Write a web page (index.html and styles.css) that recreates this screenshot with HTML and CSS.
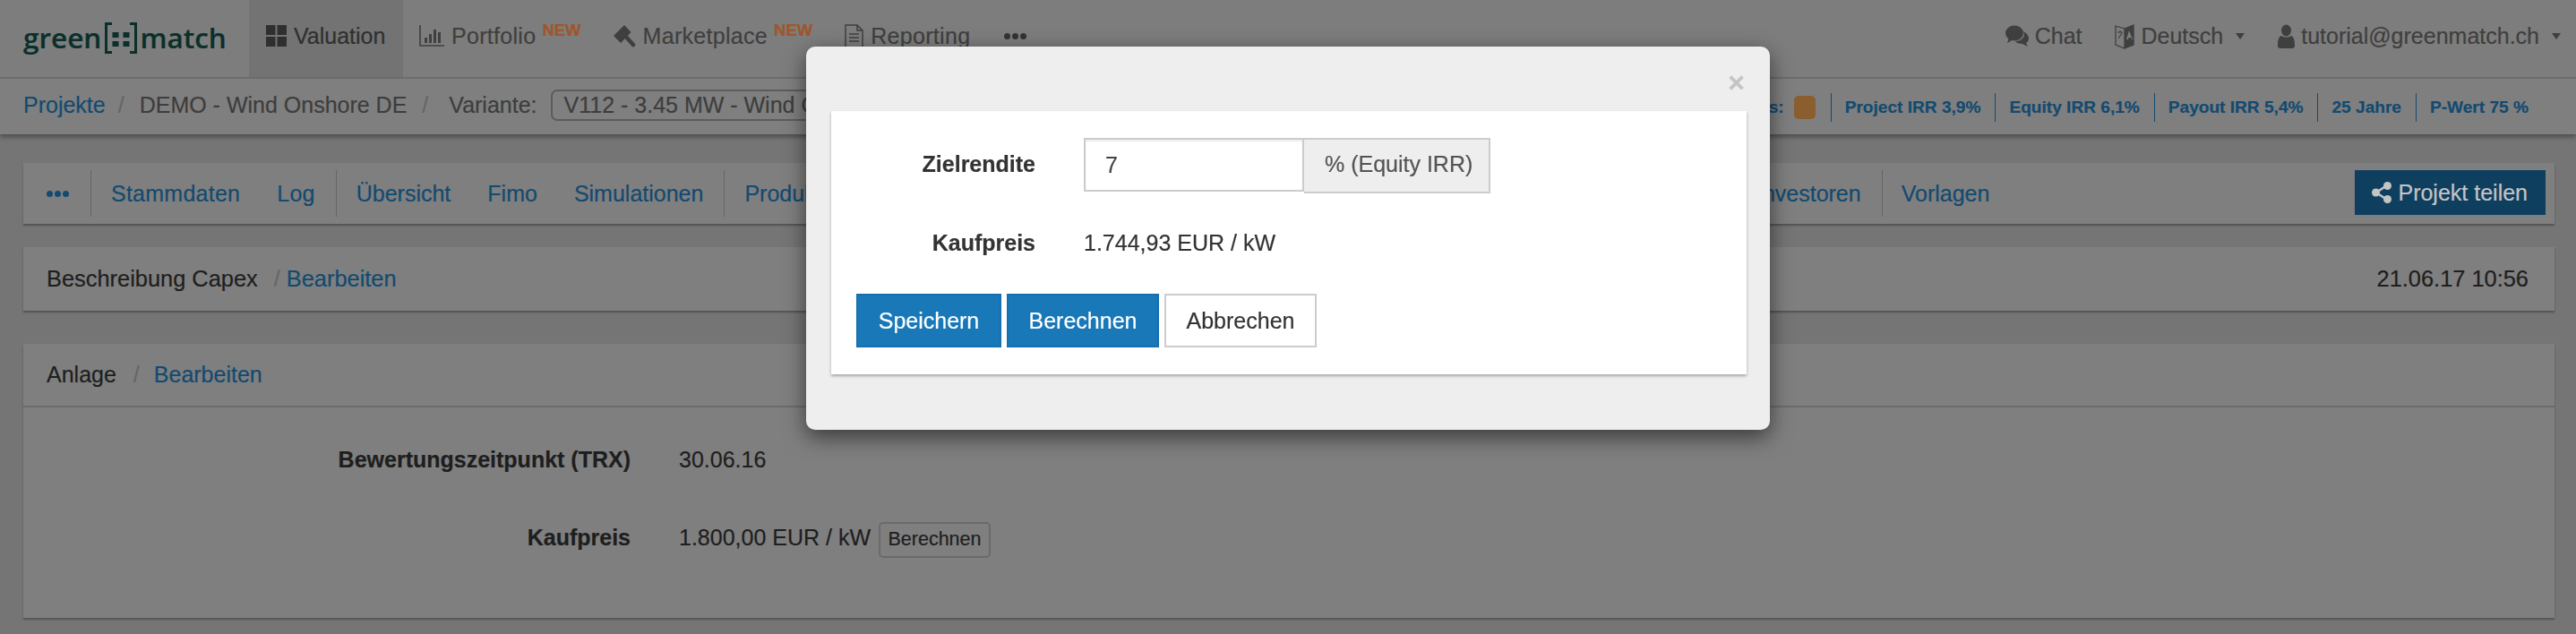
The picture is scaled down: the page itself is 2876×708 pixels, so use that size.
FILE: index.html
```html
<!DOCTYPE html>
<html lang="de">
<head>
    <meta charset="UTF-8">
    <title>greenmatch - Valuation</title>
    <link rel="stylesheet" href="styles.css">
</head>
<body>
    <!-- Top navigation -->
    <nav class="navbar">
        <a class="logo">green<svg class="logo-mark" width="36" height="35" viewBox="0 0 36 35"><path d="M8 1.500H1.500v32H8M28 1.500h6.500v32H28" fill="none" stroke="#0b2f2b" stroke-width="3"/><rect x="8.500" y="11" width="7" height="6"/><rect x="20.500" y="11" width="7" height="6"/><rect x="8.500" y="21" width="7" height="6"/><rect x="20.500" y="21" width="7" height="6"/></svg>match</a>
        <a class="nav-item active">
            <svg class="icon" width="23" height="24" viewBox="0 0 23 24"><rect width="10.5" height="11"/><rect x="12.5" width="10.5" height="11"/><rect y="13" width="10.5" height="11"/><rect x="12.5" y="13" width="10.5" height="11"/></svg>
            Valuation
        </a>
        <a class="nav-item">
            <svg class="icon" width="28" height="24" viewBox="0 0 28 24"><path d="M1 0v23h27" fill="none" stroke="currentColor" stroke-width="1.6"/><rect x="6" y="14" width="3" height="6"/><rect x="11" y="10" width="3" height="10"/><rect x="16" y="5" width="3" height="15"/><rect x="21" y="8" width="3" height="12"/></svg>
            Portfolio <sup class="new">NEW</sup>
        </a>
        <a class="nav-item">
            <svg class="icon" width="25" height="26" viewBox="0 0 25 26"><path d="M0 13L12 1l7.500 8L8 21z"/><path d="M13 13l9 10" fill="none" stroke="currentColor" stroke-width="4.500" stroke-linecap="round"/></svg>
            Marketplace <sup class="new">NEW</sup>
        </a>
        <a class="nav-item">
            <svg class="icon" width="21" height="27" viewBox="0 0 21 27"><path d="M1 1h13l6 6v19H1zM14 1v6h6M5 11h11M5 15h11M5 19h11" fill="none" stroke="currentColor" stroke-width="1.5"/></svg>
            Reporting
        </a>
        <a class="nav-item nav-dots"><span class="dots"><i></i><i></i><i></i></span></a>

        <div class="nav-right">
            <a class="nav-link">
                <svg class="icon" width="26" height="24" viewBox="0 0 26 24"><ellipse cx="10" cy="9" rx="10" ry="8.5"/><path d="M4 14l-2 6 7-4zM20 7c4 2 6 5 6 8 0 2-1 4-3 5l2 4-6-3c-4 0-7-1-8-3 7 0 12-5 9-11z"/></svg>
                Chat
            </a>
            <a class="nav-link">
                <svg class="icon" width="22" height="30" viewBox="0 0 22 30"><path d="M1 4l10 3v22L1 25zM11 7l10-4v22l-10 4" fill="none" stroke="currentColor" stroke-width="1.3"/><path d="M11 7l10-4v22l-10 4zM16 9l-3 10h2l.6-2h2.8l.6 2h1z"/><path d="M3 11h6M6 9v2M4 18l4-6" fill="none" stroke="currentColor" stroke-width="1.2"/></svg>
                Deutsch <span class="caret"></span>
            </a>
            <a class="nav-link">
                <svg class="icon" width="19" height="27" viewBox="0 0 19 27"><ellipse cx="9.500" cy="7" rx="5.500" ry="6.500"/><path d="M0 24c0-7 1.500-11 4.500-11 2 2 8 2 10 0 3 0 4.500 4 4.500 11 0 2-1 3-3 3H3c-2 0-3-1-3-3z"/></svg>
                tutorial@greenmatch.ch <span class="caret"></span>
            </a>
        </div>
    </nav>

    <!-- Breadcrumb and key figures -->
    <div class="subbar">
        <a class="link">Projekte</a>
        <span class="slash">/</span>
        <span>DEMO - Wind Onshore DE</span>
        <span class="slash slash-wide">/</span>
        <span>Variante:</span>
        <span class="variant">V112 - 3.45 MW - Wind Onshore</span>

        <div class="stats">
            <span class="status-label">Status:</span>
            <span class="status-box"></span>
            <span class="stat">Project IRR 3,9%</span>
            <span class="stat">Equity IRR 6,1%</span>
            <span class="stat">Payout IRR 5,4%</span>
            <span class="stat">25 Jahre</span>
            <span class="stat">P-Wert 75 %</span>
        </div>
    </div>

    <main class="content">
        <div class="card tabs">
            <div class="tab-group tab-first"><span class="dots"><i></i><i></i><i></i></span></div>
            <div class="tab-group tab-spaced"><a class="link">Stammdaten</a><a class="link">Log</a></div>
            <div class="tab-group"><a class="link">Übersicht</a><a class="link">Fimo</a><a class="link">Simulationen</a></div>
            <div class="tab-group tab-wide"><a class="link">Produktion</a><a class="link tab-investoren">Investoren</a></div>
            <div class="tab-group tab-last"><a class="link">Vorlagen</a></div>
            <a class="share-btn">
                <svg class="icon" width="22" height="24" viewBox="0 0 22 24"><path d="M17 4L5 12l12 8" fill="none" stroke="currentColor" stroke-width="2.6"/><circle cx="17.5" cy="4.5" r="4.5"/><circle cx="4.5" cy="12" r="4.5"/><circle cx="17.5" cy="19.5" r="4.5"/></svg>
                Projekt teilen
            </a>
        </div>

        <div class="card description">
            <span>Beschreibung Capex</span>
            <span class="slash slash-tight">/</span>
            <a class="link">Bearbeiten</a>
            <span class="timestamp">21.06.17 10:56</span>
        </div>

        <div class="card plant">
            <div class="plant-head">
                <span>Anlage</span>
                <span class="slash slash-head">/</span>
                <a class="link">Bearbeiten</a>
            </div>
            <div class="plant-row">
                <span class="plant-label">Bewertungszeitpunkt (TRX)</span>
                <span>30.06.16</span>
            </div>
            <div class="plant-row">
                <span class="plant-label">Kaufpreis</span>
                <span>1.800,00 EUR / kW</span>
                <button class="small-btn">Berechnen</button>
            </div>
        </div>
    </main>

    <!-- Modal -->
    <div class="modal">
        <span class="modal-close">×</span>
        <div class="modal-panel">
            <div class="form-row">
                <label class="form-label">Zielrendite</label>
                <div class="input-group">
                    <input class="form-input" type="text" value="7">
                    <span class="input-addon">% (Equity IRR)</span>
                </div>
            </div>
            <div class="form-row form-row-value">
                <label class="form-label">Kaufpreis</label>
                <span>1.744,93 EUR / kW</span>
            </div>
            <div class="form-actions">
                <button class="btn btn-primary">Speichern</button>
                <button class="btn btn-primary">Berechnen</button>
                <button class="btn btn-plain">Abbrechen</button>
            </div>
        </div>
    </div>
</body>
</html>
```

FILE: styles.css
```css
* {
    margin: 0;
    padding: 0;
    box-sizing: border-box;
}

/* Colours are as seen through the dark modal backdrop */
body {
    font-family: "Liberation Sans", Arial, sans-serif;
    font-size: 25px;
    background: #757575;
    color: #1e1e1e;
    -webkit-text-stroke: 0.2px;
}

.icon {
    fill: currentColor;
    flex: none;
}

.link {
    color: #134a70;
}

.slash {
    color: #666;
    margin: 0 17px 0 14px;
}

.slash-wide {
    margin: 0 23px 0 17px;
}

.dots {
    display: flex;
    gap: 2px;
}

.dots i {
    width: 7px;
    height: 7px;
    border-radius: 50%;
    background: currentColor;
}

/* Top navigation */
.navbar {
    display: flex;
    height: 88px;
    background: #7d7d7d;
    border-bottom: 2px solid #6f6f6f;
    color: #3f3f3f;
}

.logo {
    display: flex;
    align-items: center;
    width: 278px;
    padding: 0 0 4px 26px;
    font-family: "Open Sans", sans-serif;
    font-size: 31.5px;
    font-weight: 600;
    color: #0b2f2b;
}

.logo-mark {
    fill: #0b2f2b;
    margin: 2px 3px 0 4px;
}

.nav-item {
    display: flex;
    align-items: center;
    gap: 8px;
    padding: 0 18px 6px;
    letter-spacing: 0.3px;
}

.nav-item.active {
    width: 172px;
    padding: 0 0 6px 19px;
    background: #737373;
    color: #2f2f2f;
    letter-spacing: 0;
}

.nav-dots {
    padding-left: 20px;
    color: #333;
}

.new {
    align-self: flex-start;
    margin: 24px 0 0 -1px;
    font-size: 18.5px;
    font-weight: bold;
    line-height: 20px;
    letter-spacing: 0;
    color: #a0552a;
}

.nav-right {
    display: flex;
    align-items: center;
    gap: 37px;
    margin-left: auto;
    padding: 0 17px 6px 0;
}

.nav-link {
    display: flex;
    align-items: center;
    gap: 7px;
}

.caret {
    margin-left: 7px;
    border-top: 7px solid #3f3f3f;
    border-left: 5.5px solid transparent;
    border-right: 5.5px solid transparent;
}

/* Breadcrumb bar */
.subbar {
    display: flex;
    align-items: center;
    height: 62px;
    padding: 0 53px 3px 26px;
    background: #7f7f7f;
    box-shadow: 0 3px 5px rgba(0, 0, 0, 0.35);
    color: #3d3d3d;
    position: relative;
}

.variant {
    width: 400px;
    height: 35px;
    margin: 0 0 0 15px;
    padding: 0 13px;
    border: 2px solid #5c5c5c;
    border-radius: 7px;
    line-height: 31px;
    white-space: nowrap;
    overflow: hidden;
}

.stats {
    display: flex;
    align-items: center;
    margin: 5px 0 0 auto;
    font-size: 19.1px;
    font-weight: bold;
    color: #134a70;
}

.status-box {
    width: 24px;
    height: 26px;
    margin: 0 17px 0 11px;
    border-radius: 5px;
    background: #8a5e2e;
}

.stat {
    height: 32px;
    padding: 0 16px 0 15px;
    border-left: 1px solid #134a70;
    line-height: 32px;
}

.stat:last-child {
    padding-right: 0;
}

/* Cards */
.content {
    padding: 32px 24px 18px 26px;
}

.card {
    background: #7f7f7f;
    box-shadow: 0 2px 2px rgba(0, 0, 0, 0.3);
}

.tabs {
    display: flex;
    align-items: center;
    height: 68px;
    padding: 8px 10px 8px 0;
    margin-bottom: 26px;
}

.tab-group {
    display: flex;
    align-items: center;
    gap: 41px;
    height: 52px;
    padding: 0 23px 0 22px;
    border-left: 1px solid #666;
}

.tab-first {
    width: 75px;
    padding-left: 26px;
    border-left: 0;
    color: #134a70;
}

.tab-spaced {
    letter-spacing: 0.25px;
}

.tab-wide {
    gap: 0;
}

.tab-investoren {
    margin-left: 1010px;
}

.tab-last {
    padding-left: 21px;
}

.share-btn {
    display: flex;
    align-items: center;
    gap: 7px;
    height: 50px;
    margin: 0 0 2px auto;
    padding: 0 20px 0 19px;
    background: #0f3f5f;
    color: #c4c4c4;
}

.description {
    display: flex;
    align-items: center;
    height: 71px;
    padding: 0 29px 0 26px;
    margin-bottom: 37px;
    font-size: 25.4px;
}

.slash-tight {
    margin: 0 7px 0 18px;
}

.slash-head {
    margin: 0 16px 0 19px;
}

.timestamp {
    margin-left: auto;
}

.plant {
    height: 306px;
}

.plant-head {
    display: flex;
    align-items: center;
    height: 71px;
    padding-left: 26px;
    border-bottom: 2px solid #6c6c6c;
}

.plant-row {
    display: flex;
    align-items: center;
    height: 36px;
    margin-top: 40px;
}

.plant-row + .plant-row {
    margin-top: 51px;
}

.plant-label {
    width: 678px;
    margin-right: 54px;
    font-weight: bold;
    text-align: right;
}

.small-btn {
    height: 40px;
    width: 125px;
    margin: 5px 0 0 9px;
    border: 2px solid #6a6a6a;
    border-radius: 5px;
    background: #7f7f7f;
    color: #1e1e1e;
    font: 21.5px "Liberation Sans", Arial, sans-serif;
}

/* Modal */
.modal {
    position: fixed;
    top: 52px;
    left: 900px;
    width: 1076px;
    height: 428px;
    padding: 72px 26px 0 28px;
    background: #eee;
    border-radius: 10px;
    box-shadow: 0 8px 24px rgba(0, 0, 0, 0.55);
    color: #333;
}

.modal-close {
    position: absolute;
    top: 18px;
    right: 28px;
    font-size: 32px;
    font-weight: bold;
    line-height: 44px;
    color: #c4c4c4;
}

.modal-panel {
    height: 294px;
    padding: 30px 28px 0;
    background: #fff;
    box-shadow: 0 2px 3px rgba(0, 0, 0, 0.3);
}

.form-row {
    display: flex;
    align-items: flex-start;
    height: 62px;
}

.form-row-value {
    align-items: center;
    height: 36px;
    margin-top: 37px;
}

.form-label {
    width: 200px;
    margin-right: 54px;
    font-weight: bold;
    text-align: right;
    line-height: 59px;
}

.form-row-value .form-label {
    line-height: 36px;
}

.input-group {
    display: flex;
    align-items: flex-start;
}

.form-input {
    width: 246px;
    height: 60px;
    padding: 0 22px;
    border: 2px solid #ccc;
    box-shadow: inset 0 2px 2px rgba(0, 0, 0, 0.08);
    font: 25px "Liberation Sans", Arial, sans-serif;
    color: #444;
}

.input-addon {
    width: 208px;
    height: 62px;
    padding-left: 23px;
    background: #eee;
    border: 2px solid #ccc;
    border-left: 0;
    line-height: 54px;
    color: #555;
}

.form-actions {
    display: flex;
    gap: 6px;
    margin-top: 39px;
}

.btn {
    height: 60px;
    font: 25px "Liberation Sans", Arial, sans-serif;
    border: 2px solid #ccc;
    background: #fff;
    color: #333;
}

.btn-primary {
    border-color: #166fae;
    background: #1878b8;
    color: #fff;
}

.btn:nth-child(1) {
    width: 162px;
}

.btn:nth-child(2) {
    width: 170px;
}

.btn:nth-child(3) {
    width: 170px;
}
```
